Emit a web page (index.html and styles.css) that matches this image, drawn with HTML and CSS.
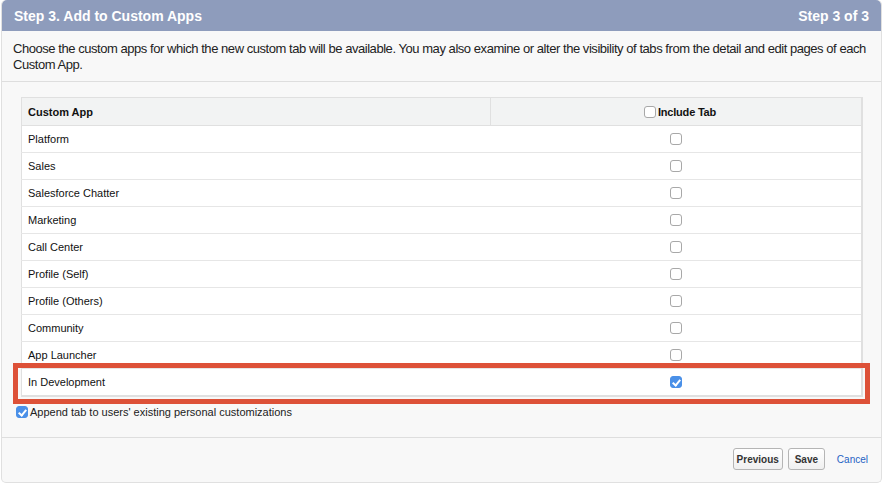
FILE: index.html
```html
<!DOCTYPE html>
<html lang="en">
<head>
  <meta charset="UTF-8">
  <title>Step 3. Add to Custom Apps</title>
  <link rel="stylesheet" href="styles.css">
</head>
<body>
  <div class="panel">
    <header class="panel-head">
      <h2>Step 3. Add to Custom Apps</h2>
      <span class="step">Step 3 of 3</span>
    </header>

    <p class="desc">Choose the custom apps for which the new custom tab will be available. You may also examine or alter the visibility of tabs from the detail and edit pages of each Custom App.</p>

    <div class="table-wrap">
      <table class="apps">
        <thead>
          <tr>
            <th class="col-app">Custom App</th>
            <th class="col-inc"><span class="cb"></span>Include Tab</th>
          </tr>
        </thead>
        <tbody>
          <tr><td>Platform</td><td class="col-inc"><span class="cb"></span></td></tr>
          <tr><td>Sales</td><td class="col-inc"><span class="cb"></span></td></tr>
          <tr><td>Salesforce Chatter</td><td class="col-inc"><span class="cb"></span></td></tr>
          <tr><td>Marketing</td><td class="col-inc"><span class="cb"></span></td></tr>
          <tr><td>Call Center</td><td class="col-inc"><span class="cb"></span></td></tr>
          <tr><td>Profile (Self)</td><td class="col-inc"><span class="cb"></span></td></tr>
          <tr><td>Profile (Others)</td><td class="col-inc"><span class="cb"></span></td></tr>
          <tr><td>Community</td><td class="col-inc"><span class="cb"></span></td></tr>
          <tr><td>App Launcher</td><td class="col-inc"><span class="cb"></span></td></tr>
          <tr><td>In Development</td><td class="col-inc"><span class="cb checked"></span></td></tr>
        </tbody>
      </table>
      <div class="highlight"></div>
    </div>

    <label class="append"><span class="cb checked"></span>Append tab to users' existing personal customizations</label>

    <footer class="panel-foot">
      <button class="btn">Previous</button>
      <button class="btn btn-save">Save</button>
      <a href="#" class="cancel">Cancel</a>
    </footer>
  </div>
</body>
</html>
```

FILE: styles.css
```css
* {
  margin: 0;
  padding: 0;
  box-sizing: border-box;
}

body {
  font-family: "Liberation Sans", Arial, sans-serif;
  background-color: #fff;
  color: #222;
}

.panel {
  width: 881px;
  height: 483px;
  margin-left: 1px;
  background-color: #f8f8f8;
  border: 1px solid #e0e0e0;
  border-top: none;
  border-radius: 5px;
  position: relative;
}

.panel-head {
  height: 31px;
  padding: 0 12px 0 12px;
  display: flex;
  justify-content: space-between;
  align-items: center;
  background-color: #8e9cbc;
  border-radius: 5px 5px 0 0;
  color: #fff;
  font-size: 14px;
  font-weight: bold;
}

.panel-head h2 {
  font-size: 14px;
}

.desc {
  padding: 10px 12px 8px 11px;
  font-size: 13px;
  line-height: 16px;
  letter-spacing: -0.45px;
  color: #222;
  border-bottom: 1px solid #dedede;
}

.table-wrap {
  position: relative;
  margin: 15px 19px 0 19px;
  width: 842px;
}

.apps {
  width: 100%;
  border-collapse: collapse;
  background-color: #fff;
  border: 1px solid #e0e0e0;
  border-right-width: 2px;
  border-bottom-width: 2px;
  font-size: 11px;
}

.apps th {
  height: 28px;
  background-color: #f2f3f3;
  font-weight: bold;
  text-align: left;
  padding: 0 6px;
  border-bottom: 1px solid #e0e0e0;
  color: #111;
}

.apps th.col-app {
  width: 469px;
  border-right: 1px solid #e0e0e0;
}

.apps th.col-inc {
  text-align: center;
  padding-left: 14px;
  letter-spacing: -0.2px;
}

.apps td {
  height: 27px;
  padding: 0 6px;
  border-top: 1px solid #e6e6e6;
  color: #111;
}

.apps td.col-inc {
  text-align: center;
}

.apps th.col-inc .cb {
  margin-right: 2px;
}

.cb {
  display: inline-block;
  width: 12px;
  height: 12px;
  border: 1px solid #a8a8a8;
  border-radius: 3px;
  background-color: #fff;
  vertical-align: -2px;
  position: relative;
}

.cb.checked {
  background-color: #4a90e8;
  border-color: #4a90e8;
}

.cb.checked::after {
  content: "";
  position: absolute;
  left: 3px;
  top: 1px;
  width: 3px;
  height: 6px;
  border: solid #fff;
  border-width: 0 2px 2px 0;
  transform: rotate(40deg);
}

.highlight {
  position: absolute;
  left: -8px;
  right: -7px;
  bottom: -7px;
  height: 41px;
  border: 5px solid #dd5138;
}

.append {
  display: flex;
  align-items: center;
  gap: 2px;
  margin: 9px 0 0 14px;
  font-size: 11px;
  color: #222;
}

.panel-foot {
  position: absolute;
  left: 0;
  right: 0;
  bottom: 0;
  height: 45px;
  border-top: 1px solid #dedede;
  display: flex;
  justify-content: flex-end;
  align-items: center;
  gap: 5px;
  padding: 0 13px 2px 0;
}

.btn {
  height: 22px;
  padding: 0 3px;
  font-family: "Liberation Sans", Arial, sans-serif;
  font-size: 10px;
  font-weight: bold;
  color: #333;
  background: linear-gradient(#ffffff, #f0f0f0);
  border: 1px solid #b5b5b5;
  border-radius: 3px;
}

.btn-save {
  min-width: 37px;
}

.cancel {
  margin-left: 7px;
  font-size: 10px;
  color: #1f62c4;
  text-decoration: none;
}
```
